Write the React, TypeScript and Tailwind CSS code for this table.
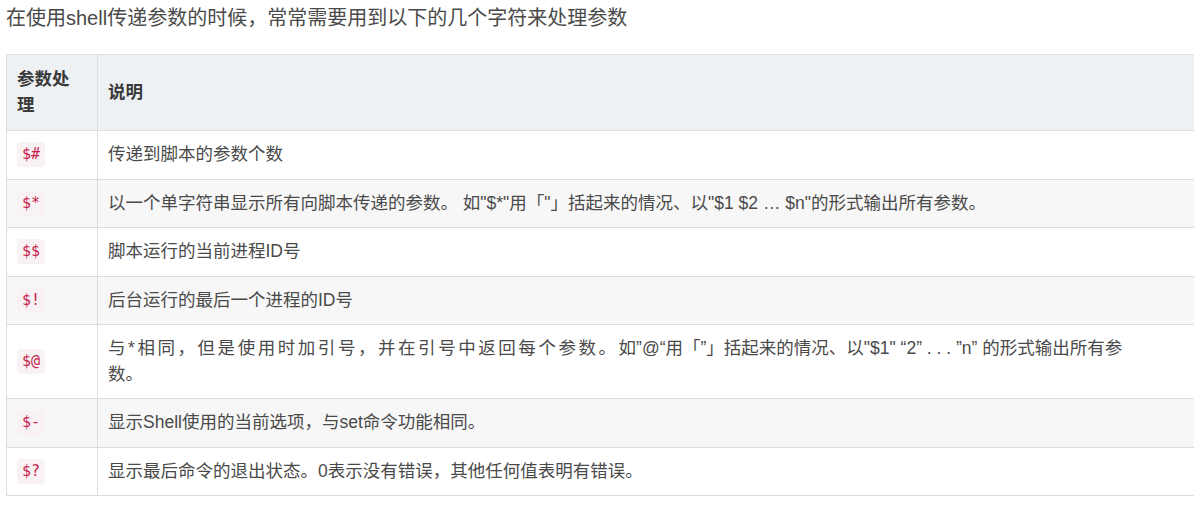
import React from "react"

interface Row {
  code: string
  desc: React.ReactNode
}

const rows: Row[] = [
  { code: "$#", desc: "传递到脚本的参数个数" },
  {
    code: "$*",
    desc: "以一个单字符串显示所有向脚本传递的参数。 如\"$*\"用「\"」括起来的情况、以\"$1 $2 … $n\"的形式输出所有参数。",
  },
  { code: "$$", desc: "脚本运行的当前进程ID号" },
  { code: "$!", desc: "后台运行的最后一个进程的ID号" },
  {
    code: "$@",
    desc: (
      <>
        <span className="tracking-[2.55px]">与*相同，但是使用时加引号，并在引号中返回每个参数。</span>
        如”@“用「”」括起来的情况、以"$1" “2” . . . ”n” 的形式输出所有参
        <br />
        数。
      </>
    ),
  },
  { code: "$-", desc: "显示Shell使用的当前选项，与set命令功能相同。" },
  { code: "$?", desc: "显示最后命令的退出状态。0表示没有错误，其他任何值表明有错误。" },
]

export default function App() {
  return (
    <div
      className="w-[1194px] h-[509px] overflow-hidden bg-white pl-[6px] text-[#4a4a4a]"
      style={{ fontFamily: '"Liberation Sans", "Noto Sans CJK SC", sans-serif' }}
    >
      <p className="text-[20px] leading-[36px] whitespace-nowrap">
        在使用shell传递参数的时候，常常需要用到以下的几个字符来处理参数
      </p>
      <table className="mt-[18px] w-[1210px] border-collapse text-[17.5px] leading-[25.5px]">
        <thead>
          <tr className="bg-[#eef1f4]">
            <th className="w-[91px] border border-[#dcdfe3] px-[10px] py-[12px] text-left font-bold text-[#3a3a3a]">
              参数处
              <br />理
            </th>
            <th className="border border-[#dcdfe3] px-[10px] py-[12px] text-left font-bold text-[#3a3a3a]">
              说明
            </th>
          </tr>
        </thead>
        <tbody>
          {rows.map((row, i) => (
            <tr key={row.code} className={i % 2 === 1 ? "bg-[#f7f7f7]" : "bg-white"}>
              <td className="border border-[#dcdcdc] px-[10px] py-[11px] align-middle">
                <div className="flex h-[25.5px] items-center">
                  <code
                    className="rounded-[4px] bg-[#f9f2f4] px-[5px] text-[15px] leading-[25px] text-[#c7254e]"
                    style={{ fontFamily: '"DejaVu Sans Mono", monospace' }}
                  >
                    {row.code}
                  </code>
                </div>
              </td>
              <td className="border border-[#dcdcdc] px-[10px] py-[11px] align-middle">{row.desc}</td>
            </tr>
          ))}
        </tbody>
      </table>
    </div>
  )
}
